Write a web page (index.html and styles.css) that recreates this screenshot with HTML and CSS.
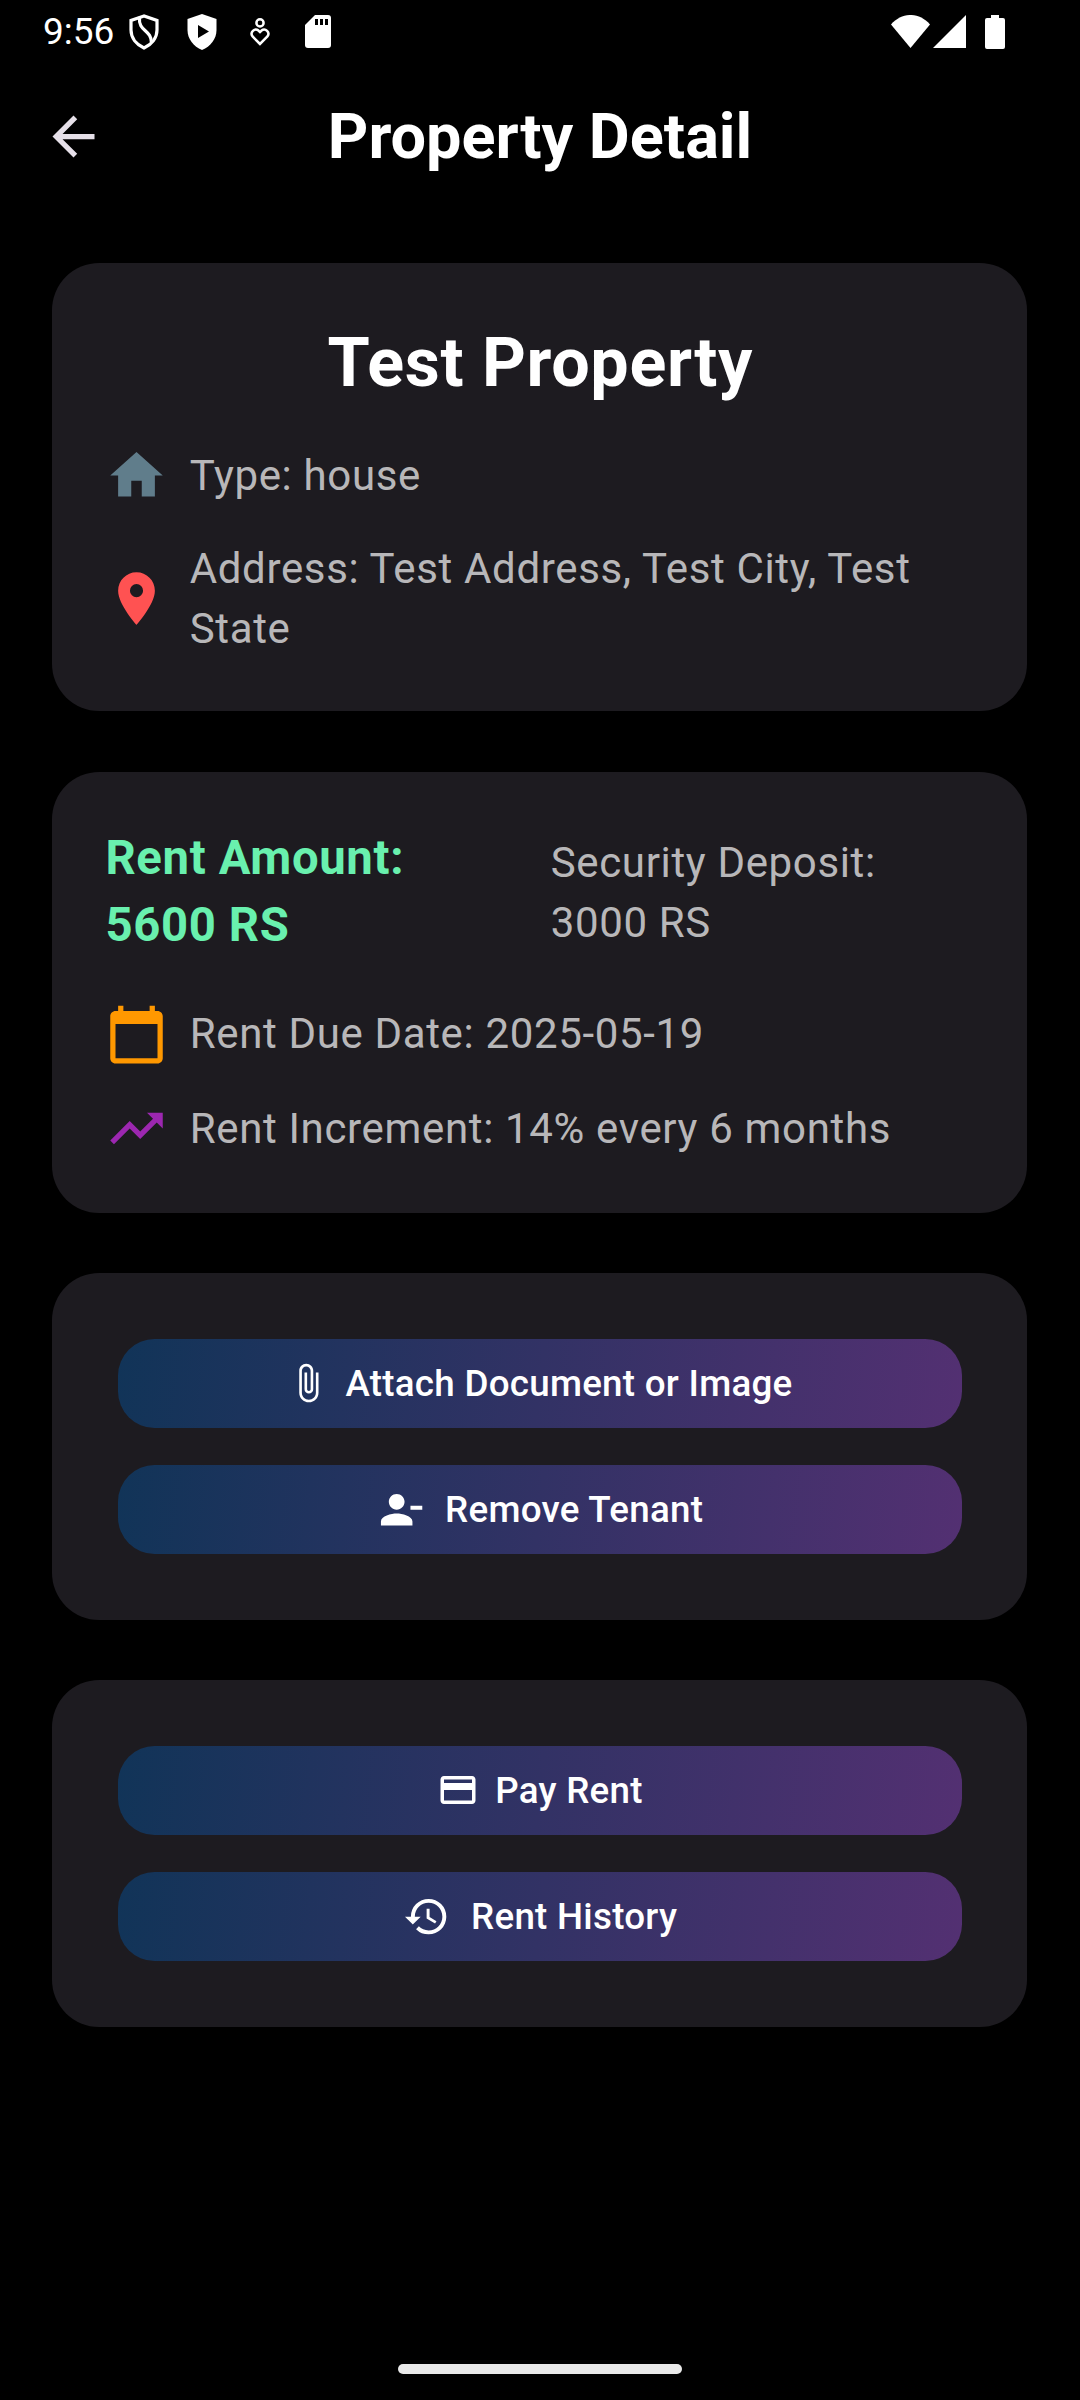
FILE: index.html
```html
<!DOCTYPE html>
<html lang="en">
<head>
<meta charset="utf-8">
<title>Property Detail</title>
<link rel="stylesheet" href="styles.css">
</head>
<body>
<div class="screen">
  <header class="status-bar">
    <div class="status-left">
      <span class="clock">9:56</span>
      <svg class="status-icon shield" viewBox="0 0 30 36"><g fill="none" stroke="#fff"><path stroke-width="3.200" d="M15 2 2 6.500V16c0 8 5.500 14.500 13 18 7.500-3.500 13-10 13-18V6.500z"/><path stroke-width="3.200" d="M10.500 3C9 18 22.500 15 22.500 29"/></g></svg>
      <svg class="status-icon shield" viewBox="0 0 30 36"><path fill="#fff" d="M15 0 .5 5v11C.5 25 6.500 32.500 15 36c8.500-3.500 14.500-11 14.500-20V5z"/><path d="M11 11v13l11-6.500z"/></svg>
      <svg class="status-icon heart" viewBox="0 0 20 28"><g fill="none" stroke="#fff" stroke-width="2.500"><circle cx="10" cy="4.900" r="3.600"/><path d="M10 26 2.600 18.500a4.200 4.200 0 0 1 5.900-5.900L10 14.100l1.500-1.500a4.200 4.200 0 0 1 5.900 5.900z"/></g></svg>
      <svg class="status-icon card-icon" viewBox="0 0 26 33"><path fill="#fff" d="M10 0h13a3 3 0 0 1 3 3v27a3 3 0 0 1-3 3H3a3 3 0 0 1-3-3V10z"/><path d="M10 4h3v6h-3zM15 4h3v6h-3zM20 4h3v6h-3z"/></svg>
    </div>
    <div class="status-right">
      <svg class="wifi" viewBox="0 0 39 33"><path fill="#fff" d="M0 9.500C11-3.200 28-3.200 39 9.500L19.500 33z"/></svg>
      <svg class="signal" viewBox="0 0 33 33"><path fill="#fff" d="M33 0v33H0z"/></svg>
      <svg class="battery" viewBox="0 0 20 34"><path fill="#fff" d="M6 0h8v3h4a2 2 0 0 1 2 2v27a2 2 0 0 1-2 2H2a2 2 0 0 1-2-2V5a2 2 0 0 1 2-2h4z"/></svg>
    </div>
  </header>

  <nav class="app-bar">
    <svg class="back" viewBox="0 0 24 24"><path fill="#e6e0e9" d="M20 11H7.830l5.590-5.590L12 4l-8 8 8 8 1.410-1.410L7.830 13H20z"/></svg>
    <h1 class="page-title">Property Detail</h1>
  </nav>

  <main class="content">
    <section class="card summary">
      <h2 class="property-name">Test Property</h2>
      <div class="row">
        <svg class="icon" viewBox="0 0 24 24"><path fill="#607d8b" d="M10 20v-6h4v6h5v-8h3L12 3 2 12h3v8z"/></svg>
        <p class="body-text">Type: house</p>
      </div>
      <div class="row">
        <svg class="icon" viewBox="0 0 24 24"><path fill="#ff5252" d="M12 2C8.130 2 5 5.130 5 9c0 5.250 7 13 7 13s7-7.750 7-13c0-3.870-3.130-7-7-7zm0 9.500a2.500 2.500 0 0 1 0-5 2.500 2.500 0 0 1 0 5z"/></svg>
        <p class="body-text">Address: Test Address, Test City, Test<br>State</p>
      </div>
    </section>

    <section class="card">
      <div class="amounts">
        <p class="rent">Rent Amount:<br>5600 RS</p>
        <p class="body-text">Security Deposit:<br>3000 RS</p>
      </div>
      <div class="row">
        <svg class="icon" viewBox="0 0 24 24"><path fill="#ff9800" d="M20 3h-1V1h-2v2H7V1H5v2H4c-1.100 0-2 .9-2 2v16c0 1.100.9 2 2 2h16c1.100 0 2-.9 2-2V5c0-1.100-.9-2-2-2zm0 18H4V8h16v13z"/></svg>
        <p class="body-text">Rent Due Date: 2025-05-19</p>
      </div>
      <div class="row">
        <svg class="icon" viewBox="0 0 24 24"><path fill="#9c27b0" d="m16 6 2.290 2.290-4.880 4.880-4-4L2 16.590 3.410 18l6-6 4 4 6.300-6.290L22 12V6z"/></svg>
        <p class="body-text">Rent Increment: 14% every 6 months</p>
      </div>
    </section>

    <section class="card actions">
      <button class="action compact">
        <svg viewBox="0 0 24 24"><path d="M16.500 6v11.500c0 2.210-1.790 4-4 4s-4-1.790-4-4V5a2.500 2.500 0 0 1 5 0v10.500c0 .55-.45 1-1 1s-1-.45-1-1V6H10v9.500a2.500 2.500 0 0 0 5 0V5c0-2.210-1.790-4-4-4S7 2.790 7 5v12.500c0 3.040 2.460 5.500 5.500 5.500s5.500-2.460 5.500-5.500V6z"/></svg>
        <span>Attach Document or Image</span>
      </button>
      <button class="action">
        <svg viewBox="0 0 24 24"><path d="M14 8c0-2.210-1.790-4-4-4S6 5.790 6 8s1.790 4 4 4 4-1.790 4-4zm3 2v2h6v-2zM2 18v2h16v-2c0-2.660-5.330-4-8-4s-8 1.340-8 4z"/></svg>
        <span>Remove Tenant</span>
      </button>
    </section>

    <section class="card actions">
      <button class="action compact">
        <svg viewBox="0 0 24 24"><path d="M20 4H4c-1.110 0-1.990.89-1.990 2L2 18c0 1.110.89 2 2 2h16c1.110 0 2-.89 2-2V6c0-1.110-.89-2-2-2zm0 14H4v-6h16v6zm0-10H4V6h16v2z"/></svg>
        <span>Pay Rent</span>
      </button>
      <button class="action">
        <svg viewBox="0 0 24 24"><path d="M13 3a9 9 0 0 0-9 9H1l3.890 3.890.07.14L9 12H6c0-3.870 3.130-7 7-7s7 3.130 7 7-3.130 7-7 7c-1.930 0-3.680-.79-4.940-2.060l-1.420 1.420A8.954 8.954 0 0 0 13 21a9 9 0 0 0 0-18zm-1 5v5l4.280 2.540.72-1.210-3.500-2.080V8z"/></svg>
        <span>Rent History</span>
      </button>
    </section>
  </main>

  <footer class="gesture-bar"><div class="handle"></div></footer>
</div>
</body>
</html>
```
FILE: styles.css
```css
* { box-sizing: border-box; }

body {
  margin: 0;
  background: #000;
  font-family: Roboto, "Liberation Sans", sans-serif;
}

h1, h2, p { margin: 0; }
svg { display: block; flex: none; }

.screen {
  width: 1080px;
  height: 2400px;
  display: flex;
  flex-direction: column;
  background: #000;
  overflow: hidden;
}

/* Status bar */
.status-bar {
  height: 63px;
  padding: 0 75px 0 43px;
  display: flex;
  justify-content: space-between;
}
.status-left, .status-right { display: flex; align-items: center; }
.clock { width: 86px; font-size: 37px; line-height: 63px; color: #fff; }
.shield { width: 30px; height: 36px; margin-right: 28px; }
.heart { width: 20px; height: 28px; margin: 0 35px 0 5px; }
.card-icon { width: 26px; height: 33px; }
.wifi { width: 39px; height: 33px; margin-right: 3px; }
.signal { width: 33px; height: 33px; margin-right: 19px; }
.battery { width: 20px; height: 34px; }

/* App bar */
.app-bar {
  height: 147px;
  padding: 0 42px;
  display: grid;
  grid-template-columns: 63px 1fr 63px;
  align-items: center;
}
.back { width: 63px; height: 63px; }
.page-title {
  text-align: center;
  font-size: 63px;
  font-weight: 700;
  line-height: 80px;
  color: #fff;
}

/* Cards */
.content {
  padding: 53px 53px 0 52px;
  display: flex;
  flex-direction: column;
  gap: 60px;
  flex: 1;
}
.card {
  padding: 52.5px 52px 52.6px 53.4px;
  border-radius: 47.25px;
  background: #1d1b20;
  display: flex;
  flex-direction: column;
  gap: 31.5px;
}
.summary { padding-bottom: 52.5px; margin-bottom: 1px; }
.property-name {
  margin-bottom: 3px;
  text-align: center;
  font-size: 68.25px;
  font-weight: 700;
  line-height: 94px;
  letter-spacing: 0.66px;
  color: #fff;
}
.row { display: flex; align-items: center; gap: 21.3px; }
.icon { width: 63px; height: 63px; }
.body-text {
  font-size: 42px;
  line-height: 60px;
  letter-spacing: 0.656px;
  color: rgba(255, 255, 255, 0.7);
}
.amounts {
  display: grid;
  grid-template-columns: 1fr 1fr;
  gap: 21px;
  align-items: center;
  margin-bottom: 10.9px;
}
.rent {
  padding-bottom: 1px;
  font-size: 47.25px;
  font-weight: 700;
  line-height: 67.5px;
  letter-spacing: 0.656px;
  color: #69f0ae;
}

/* Action buttons */
.actions { padding: 66px 65px 66px 66px; gap: 37px; }
.action {
  height: 89px;
  padding: 0;
  border: 0;
  border-radius: 36.75px;
  display: flex;
  align-items: center;
  justify-content: center;
  gap: 21px;
  background: linear-gradient(96deg, #113458, #533072);
  color: #fff;
  font-family: inherit;
  font-size: 36.75px;
  font-weight: 500;
  letter-spacing: 0.26px;
}
.action svg { width: 47.25px; height: 47.25px; fill: #fff; }
.action.compact { gap: 16px; }
.action.compact svg { width: 42px; height: 42px; }

/* Gesture bar */
.gesture-bar {
  height: 63px;
  padding-top: 1px;
  display: flex;
  align-items: center;
  justify-content: center;
}
.handle { width: 284px; height: 10px; border-radius: 5px; background: #e9e9e9; }
```
